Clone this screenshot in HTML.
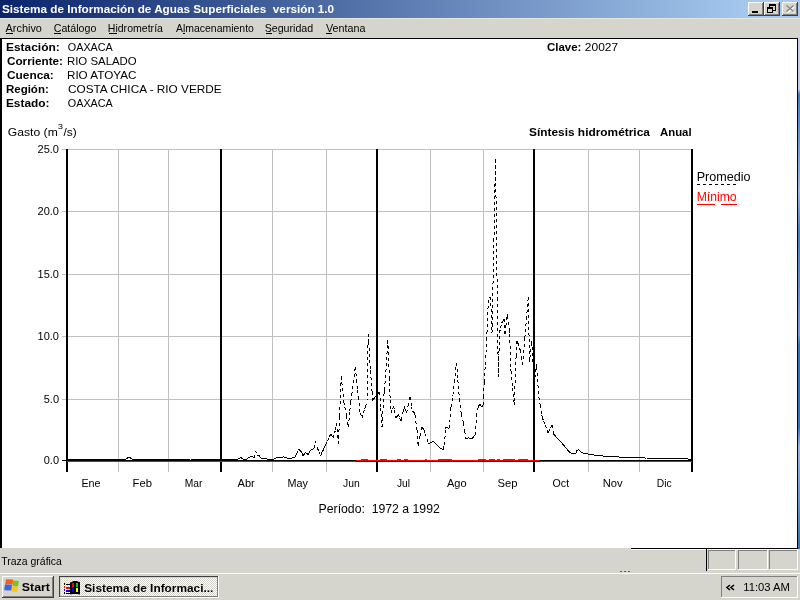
<!DOCTYPE html><html><head><meta charset="utf-8"><style>html,body{margin:0;padding:0;width:800px;height:600px;overflow:hidden;background:#D6D5CD}text{font-family:"Liberation Sans",sans-serif}</style></head><body><svg width="800" height="600" viewBox="0 0 800 600" style="display:block;will-change:transform" font-family="Liberation Sans, sans-serif"><defs><linearGradient id="tg" gradientUnits="userSpaceOnUse" x1="0" x2="760" y1="0" y2="0"><stop offset="0" stop-color="#0A246A"/><stop offset="1" stop-color="#A6CAF0"/></linearGradient><linearGradient id="rs" x1="0" x2="0" y1="0" y2="1"><stop offset="0" stop-color="#C8D0EC"/><stop offset="0.1" stop-color="#C0CCE8"/><stop offset="0.11" stop-color="#4A7CC0"/><stop offset="0.2" stop-color="#6A98D0"/><stop offset="0.3" stop-color="#9AB8E0"/><stop offset="0.38" stop-color="#4A7CC0"/><stop offset="0.58" stop-color="#7C9CD0"/><stop offset="0.6" stop-color="#3A70B8"/><stop offset="0.76" stop-color="#3A70B8"/><stop offset="0.8" stop-color="#9AB8E0"/><stop offset="0.9" stop-color="#6A98D0"/><stop offset="1" stop-color="#3A6EA5"/></linearGradient></defs><rect x="0" y="0" width="800" height="600" fill="#D6D5CD"/><rect x="0" y="0" width="800" height="18" fill="url(#tg)"/><text x="2.00" y="13" font-size="11" font-weight="bold" fill="#fff" textLength="332.15" lengthAdjust="spacingAndGlyphs">Sistema de Información de Aguas Superficiales&#160; versión 1.0</text><rect x="748" y="2" width="16" height="14" fill="#404040"/><rect x="748" y="2" width="15" height="13" fill="#fff"/><rect x="749" y="3" width="14" height="12" fill="#808080"/><rect x="749" y="3" width="13" height="11" fill="#D6D5CD"/><rect x="764" y="2" width="16" height="14" fill="#404040"/><rect x="764" y="2" width="15" height="13" fill="#fff"/><rect x="765" y="3" width="14" height="12" fill="#808080"/><rect x="765" y="3" width="13" height="11" fill="#D6D5CD"/><rect x="782" y="2" width="16" height="14" fill="#404040"/><rect x="782" y="2" width="15" height="13" fill="#fff"/><rect x="783" y="3" width="14" height="12" fill="#808080"/><rect x="783" y="3" width="13" height="11" fill="#D6D5CD"/><rect x="752" y="11" width="6" height="2" fill="#000"/><rect x="769" y="4" width="6" height="6" fill="none" stroke="#000" stroke-width="1" transform="translate(0.5,0.5)"/><rect x="769" y="4" width="7" height="2" fill="#000"/><rect x="767" y="7" width="6" height="6" fill="#D6D5CD"/><rect x="767.5" y="7.5" width="5" height="5" fill="none" stroke="#000" stroke-width="1"/><rect x="767" y="7" width="6" height="2" fill="#000"/><path d="M786.5 5.5 L793.5 11.5 M793.5 5.5 L786.5 11.5" stroke="#fff" stroke-width="1.3" transform="translate(1,1)"/><path d="M786.5 5.5 L793.5 11.5 M793.5 5.5 L786.5 11.5" stroke="#808080" stroke-width="1.3"/><rect x="0" y="18" width="800" height="1" fill="#E6E5DE"/><text x="5.60" y="32" font-size="11" fill="#000" textLength="36.33" lengthAdjust="spacingAndGlyphs">Archivo</text><text x="53.75" y="32" font-size="11" fill="#000" textLength="42.55" lengthAdjust="spacingAndGlyphs">Catálogo</text><text x="107.79" y="32" font-size="11" fill="#000" textLength="55.16" lengthAdjust="spacingAndGlyphs">Hidrometría</text><text x="176.00" y="32" font-size="11" fill="#000" textLength="77.89" lengthAdjust="spacingAndGlyphs">Almacenamiento</text><text x="264.63" y="32" font-size="11" fill="#000" textLength="48.52" lengthAdjust="spacingAndGlyphs">Seguridad</text><text x="326.00" y="32" font-size="11" fill="#000" textLength="39.37" lengthAdjust="spacingAndGlyphs">Ventana</text><rect x="6" y="33" width="7" height="1" fill="#000"/><rect x="54" y="33" width="7" height="1" fill="#000"/><rect x="109" y="33" width="8" height="1" fill="#000"/><rect x="183" y="33" width="2" height="1" fill="#000"/><rect x="266" y="33" width="6" height="1" fill="#000"/><rect x="326" y="33" width="6" height="1" fill="#000"/><rect x="0" y="38" width="798" height="510" fill="#000"/><rect x="2" y="39" width="795" height="509" fill="#fff"/><rect x="798" y="38" width="2" height="511" fill="url(#rs)"/><text x="5.91" y="51" font-size="11" font-weight="bold" fill="#000" textLength="53.84" lengthAdjust="spacingAndGlyphs">Estación:</text><text x="7.00" y="65" font-size="11" font-weight="bold" fill="#000" textLength="56.00" lengthAdjust="spacingAndGlyphs">Corriente:</text><text x="7.00" y="79" font-size="11" font-weight="bold" fill="#000" textLength="46.82" lengthAdjust="spacingAndGlyphs">Cuenca:</text><text x="5.95" y="93" font-size="11" font-weight="bold" fill="#000" textLength="42.84" lengthAdjust="spacingAndGlyphs">Región:</text><text x="5.92" y="107" font-size="11" font-weight="bold" fill="#000" textLength="43.63" lengthAdjust="spacingAndGlyphs">Estado:</text><text x="67.80" y="51" font-size="11" fill="#000" textLength="44.96" lengthAdjust="spacingAndGlyphs">OAXACA</text><text x="66.96" y="65" font-size="11" fill="#000" textLength="69.80" lengthAdjust="spacingAndGlyphs">RIO SALADO</text><text x="66.94" y="79" font-size="11" fill="#000" textLength="69.49" lengthAdjust="spacingAndGlyphs">RIO ATOYAC</text><text x="68.00" y="93" font-size="11" fill="#000" textLength="153.67" lengthAdjust="spacingAndGlyphs">COSTA CHICA - RIO VERDE</text><text x="67.80" y="107" font-size="11" fill="#000" textLength="44.96" lengthAdjust="spacingAndGlyphs">OAXACA</text><text x="547.00" y="51" font-size="11" font-weight="bold" fill="#000" textLength="34.37" lengthAdjust="spacingAndGlyphs">Clave:</text><text x="584.80" y="51" font-size="11" fill="#000" textLength="33.35" lengthAdjust="spacingAndGlyphs">20027</text><text x="7.80" y="136" font-size="11" fill="#000" textLength="49.96" lengthAdjust="spacingAndGlyphs">Gasto (m</text><text x="57.83" y="128.5" font-size="8" fill="#000" textLength="5.20" lengthAdjust="spacingAndGlyphs">3</text><text x="63.50" y="136" font-size="11" fill="#000" textLength="13.25" lengthAdjust="spacingAndGlyphs">/s)</text><text x="529.00" y="136" font-size="11" font-weight="bold" fill="#000" textLength="120.86" lengthAdjust="spacingAndGlyphs">Síntesis hidrométrica</text><text x="660.00" y="136" font-size="11" font-weight="bold" fill="#000" textLength="31.58" lengthAdjust="spacingAndGlyphs">Anual</text><rect x="62" y="149" width="631" height="1" fill="#C0C0C0"/><rect x="62" y="149" width="4" height="1" fill="#C0C0C0"/><rect x="62" y="211" width="631" height="1" fill="#C0C0C0"/><rect x="62" y="211" width="4" height="1" fill="#C0C0C0"/><rect x="62" y="274" width="631" height="1" fill="#C0C0C0"/><rect x="62" y="274" width="4" height="1" fill="#C0C0C0"/><rect x="62" y="336" width="631" height="1" fill="#C0C0C0"/><rect x="62" y="336" width="4" height="1" fill="#C0C0C0"/><rect x="62" y="399" width="631" height="1" fill="#C0C0C0"/><rect x="62" y="399" width="4" height="1" fill="#C0C0C0"/><rect x="118" y="149" width="1" height="323" fill="#C0C0C0"/><rect x="168" y="149" width="1" height="323" fill="#C0C0C0"/><rect x="272" y="149" width="1" height="323" fill="#C0C0C0"/><rect x="326" y="149" width="1" height="323" fill="#C0C0C0"/><rect x="430" y="149" width="1" height="323" fill="#C0C0C0"/><rect x="483" y="149" width="1" height="323" fill="#C0C0C0"/><rect x="588" y="149" width="1" height="323" fill="#C0C0C0"/><rect x="639" y="149" width="1" height="323" fill="#C0C0C0"/><rect x="66" y="149" width="2" height="323" fill="#000"/><rect x="220" y="149" width="2" height="323" fill="#000"/><rect x="376" y="149" width="2" height="323" fill="#000"/><rect x="533" y="149" width="2" height="323" fill="#000"/><rect x="691" y="149" width="2" height="323" fill="#000"/><rect x="62" y="460" width="631" height="1" fill="#000"/><text x="59" y="153" font-size="11" fill="#000" text-anchor="end">25.0</text><text x="59" y="215" font-size="11" fill="#000" text-anchor="end">20.0</text><text x="59" y="278" font-size="11" fill="#000" text-anchor="end">15.0</text><text x="59" y="340" font-size="11" fill="#000" text-anchor="end">10.0</text><text x="59" y="403" font-size="11" fill="#000" text-anchor="end">5.0</text><text x="59" y="464" font-size="11" fill="#000" text-anchor="end">0.0</text><text x="81.42" y="487" font-size="11" fill="#000" textLength="19.14" lengthAdjust="spacingAndGlyphs">Ene</text><text x="132.58" y="487" font-size="11" fill="#000" textLength="19.42" lengthAdjust="spacingAndGlyphs">Feb</text><text x="184.67" y="487" font-size="11" fill="#000" textLength="17.69" lengthAdjust="spacingAndGlyphs">Mar</text><text x="237.50" y="487" font-size="11" fill="#000" textLength="17.23" lengthAdjust="spacingAndGlyphs">Abr</text><text x="287.42" y="487" font-size="11" fill="#000" textLength="20.37" lengthAdjust="spacingAndGlyphs">May</text><text x="343.00" y="487" font-size="11" fill="#000" textLength="16.71" lengthAdjust="spacingAndGlyphs">Jun</text><text x="397.00" y="487" font-size="11" fill="#000" textLength="12.98" lengthAdjust="spacingAndGlyphs">Jul</text><text x="447.00" y="487" font-size="11" fill="#000" textLength="19.58" lengthAdjust="spacingAndGlyphs">Ago</text><text x="497.58" y="487" font-size="11" fill="#000" textLength="20.01" lengthAdjust="spacingAndGlyphs">Sep</text><text x="552.60" y="487" font-size="11" fill="#000" textLength="16.52" lengthAdjust="spacingAndGlyphs">Oct</text><text x="602.68" y="487" font-size="11" fill="#000" textLength="19.89" lengthAdjust="spacingAndGlyphs">Nov</text><text x="656.76" y="487" font-size="11" fill="#000" textLength="14.88" lengthAdjust="spacingAndGlyphs">Dic</text><text x="318.58" y="513" font-size="12" fill="#000" textLength="121.20" lengthAdjust="spacingAndGlyphs">Período:&#160; 1972 a 1992</text><text x="696.65" y="181" font-size="12" fill="#000" textLength="53.82" lengthAdjust="spacingAndGlyphs">Promedio</text><path d="M697 184.5 H736" stroke="#000" stroke-width="1" stroke-dasharray="3 3"/><text x="696.68" y="201" font-size="12" fill="#FF0000" textLength="39.96" lengthAdjust="spacingAndGlyphs">Mínimo</text><path d="M697 204.5 H737" stroke="#FF0000" stroke-width="1" stroke-dasharray="18 6"/><path d="M67.0 459.0L68.7 459.0M68.7 459.0L70.4 459.0M70.4 459.0L72.1 459.0M72.1 459.0L73.9 459.0M73.9 459.0L75.6 459.0M75.6 459.0L77.3 459.0M77.3 459.0L79.0 459.0M79.0 459.0L80.7 459.0M80.7 459.0L82.4 459.0M82.4 459.0L84.1 459.0M84.1 459.0L85.9 459.0M85.9 459.0L87.6 459.0M87.6 459.0L89.3 459.0M89.3 459.0L91.0 459.0M91.0 459.0L92.7 459.0M92.7 459.0L94.4 459.0M94.4 459.0L96.1 459.0M96.1 459.0L97.9 459.0M97.9 459.0L99.6 459.0M99.6 459.0L100.0 459.0M100.0 459.0L101.3 459.0M101.3 459.0L103.0 459.0M103.0 459.0L104.7 459.0M104.7 459.0L106.4 459.0M106.4 459.0L108.1 459.0M108.1 459.0L109.9 459.0M109.9 459.0L111.6 459.0M111.6 459.0L113.3 459.0M113.3 459.0L115.0 459.0M115.0 459.0L116.7 459.0M116.7 459.0L118.4 459.0M118.4 459.0L120.1 459.0M120.1 459.0L121.9 459.0M121.9 459.0L123.6 459.0M123.6 459.0L125.3 459.0M125.3 459.0L126.0 459.0M126.0 459.0L127.0 458.3M127.0 458.3L128.7 457.2M128.7 457.2L129.0 457.0M129.0 457.0L130.4 458.0M130.4 458.0L132.0 459.0M132.0 459.0L132.1 459.0M132.1 459.0L133.9 459.0M133.9 459.0L135.6 459.0M135.6 459.0L137.3 459.0M137.3 459.0L139.0 459.0M139.0 459.0L140.7 459.0M140.7 459.0L142.4 459.0M142.4 459.0L144.1 459.0M144.1 459.0L145.9 459.0M145.9 459.0L147.6 459.0M147.6 459.0L149.3 459.0M149.3 459.0L151.0 459.0M151.0 459.0L152.7 459.0M152.7 459.0L154.4 459.0M154.4 459.0L156.1 459.0M156.1 459.0L157.9 459.0M157.9 459.0L159.6 459.0M159.6 459.0L160.0 459.0M160.0 459.0L161.3 459.0M161.3 459.0L163.0 459.0M163.0 459.0L164.7 459.0M164.7 459.0L166.4 459.0M166.4 459.0L168.1 459.0M168.1 459.0L169.9 459.0M169.9 459.0L171.6 459.0M171.6 459.0L173.3 459.0M173.3 459.0L175.0 459.0M175.0 459.0L176.7 459.0M176.7 459.0L178.4 459.0M178.4 459.0L180.1 459.0M180.1 459.0L181.9 459.0M181.9 459.0L183.6 459.0M183.6 459.0L185.3 459.0M185.3 459.0L187.0 459.0M187.0 459.0L188.7 459.0M188.7 459.0L190.0 459.0M190.0 459.0L190.4 459.0M190.4 459.0L192.1 459.1M192.1 459.1L193.9 459.1M193.9 459.1L195.6 459.2M195.6 459.2L197.3 459.2M197.3 459.2L199.0 459.3M199.0 459.3L200.7 459.4M200.7 459.4L202.4 459.4M202.4 459.4L204.1 459.5M204.1 459.5L205.9 459.5M205.9 459.5L207.6 459.6M207.6 459.6L209.3 459.6M209.3 459.6L211.0 459.7M211.0 459.7L212.7 459.8M212.7 459.8L214.4 459.8M214.4 459.8L216.1 459.9M216.1 459.9L217.9 459.9M217.9 459.9L219.6 460.0M219.6 460.0L220.0 460.0M220.0 460.0L221.3 459.9M221.3 459.9L223.0 459.8M223.0 459.8L224.7 459.6M224.7 459.6L226.4 459.5M226.4 459.5L227.5 459.4M227.5 459.4L228.1 459.4M228.1 459.4L229.9 459.6M229.9 459.6L231.6 459.7M231.6 459.7L232.5 459.8M232.5 459.8L233.3 459.6M233.3 459.6L235.0 459.4M235.0 459.4L236.7 459.2M236.7 459.2L238.0 459.0M238.0 459.0L238.4 458.8M238.4 458.8L240.1 457.8M240.1 457.8L240.6 457.5M240.6 457.5L241.9 458.3M241.9 458.3L243.0 459.0M243.0 459.0L243.6 459.1M243.6 459.1L245.3 459.3M245.3 459.3L246.0 459.4M246.0 459.4L247.0 458.8M247.0 458.8L248.7 457.8M248.7 457.8L250.0 457.0M250.0 457.0L250.4 456.8M250.4 456.8L251.9 456.2M251.9 456.2L252.1 456.4M252.1 456.4L253.9 457.6M253.9 457.6L254.4 458.0M254.4 458.0L255.6 450.8M255.6 450.8L255.6 450.6M255.6 450.6L256.9 455.6M256.9 455.6L257.3 455.5M257.3 455.5L258.8 455.0M258.8 455.0L259.0 455.4M259.0 455.4L260.6 458.0M260.6 458.0L260.7 458.0M260.7 458.0L262.4 458.3M262.4 458.3L264.1 458.5M264.1 458.5L265.9 458.7M265.9 458.7L266.0 458.8M266.0 458.8L267.6 459.1M267.6 459.1L269.3 459.4M269.3 459.4L271.0 459.7M271.0 459.7L272.5 460.0M272.5 460.0L272.7 459.9M272.7 459.9L274.4 458.8M274.4 458.8L276.1 457.8M276.1 457.8L276.2 457.8M276.2 457.8L277.9 457.6M277.9 457.6L279.6 457.4M279.6 457.4L281.3 457.2M281.3 457.2L283.0 457.0M283.0 457.0L283.8 456.9M283.8 456.9L284.7 457.3M284.7 457.3L286.4 457.9M286.4 457.9L288.1 458.5M288.1 458.5L288.8 458.8M288.8 458.8L289.9 458.5M289.9 458.5L291.6 458.1M291.6 458.1L293.3 457.7M293.3 457.7L294.4 457.5M294.4 457.5L295.0 456.7M295.0 456.7L296.2 455.0M296.2 455.0L296.7 453.8M296.7 453.8L298.4 449.6M298.4 449.6L298.8 448.8M298.8 448.8L300.1 450.5M300.1 450.5L301.2 451.9M301.2 451.9L301.9 453.1M301.9 453.1L303.1 455.6M303.1 455.6L303.6 455.0M303.6 455.0L305.3 452.9M305.3 452.9L305.6 452.5M305.6 452.5L307.0 453.6M307.0 453.6L308.1 454.4M308.1 454.4L308.7 453.4M308.7 453.4L310.4 450.7M310.4 450.7L311.2 449.4M311.2 449.4L312.1 449.2M312.1 449.2L313.8 448.8M313.8 448.8L313.9 448.3M313.9 448.3L315.6 440.7M315.6 440.7L315.6 440.6M315.6 440.6L316.9 446.9M316.9 446.9L317.3 447.8M317.3 447.8L319.0 451.8M319.0 451.8L320.6 455.6M320.6 455.6L320.7 455.4M320.7 455.4L322.4 451.6M322.4 451.6L323.8 448.8M323.8 448.8L324.1 447.9M324.1 447.9L325.0 446.0M325.0 446.0L325.9 444.1M325.9 444.1L327.3 441.0M327.3 441.0L327.6 440.5M327.6 440.5L329.3 437.0M329.3 437.0L330.8 434.0M330.8 434.0L331.0 434.4M331.0 434.4L332.7 437.5M332.7 437.5L333.0 438.0M333.0 438.0L334.4 433.4M334.4 433.4L335.5 430.0M335.5 430.0L336.1 426.2M336.1 426.2L336.7 423.0M336.7 423.0L337.9 436.3M337.9 436.3L338.5 443.7M338.5 443.7L339.5 418.0M339.5 418.0L339.6 416.3M339.6 416.3L341.3 376.3M341.3 376.3L341.3 376.0M341.3 376.0L343.0 394.2M343.0 394.2L343.7 401.7M343.7 401.7L344.7 406.7M344.7 406.7L346.0 413.0M346.0 413.0L346.4 415.7M346.4 415.7L348.1 426.3M348.1 426.3L348.3 427.3M348.3 427.3L349.9 410.7M349.9 410.7L350.7 401.7M350.7 401.7L351.6 396.2M351.6 396.2L351.8 394.7M351.8 394.7L353.3 382.8M353.3 382.8L355.0 369.1M355.0 369.1L355.3 366.7M355.3 366.7L356.7 380.4M356.7 380.4L357.7 390.0M357.7 390.0L358.4 397.3M358.4 397.3L360.0 413.0M360.0 413.0L360.1 413.3M360.1 413.3L361.9 417.0M361.9 417.0L362.3 418.0M362.3 418.0L363.6 413.1M363.6 413.1L364.7 408.7M364.7 408.7L365.3 406.9M365.3 406.9L367.0 401.7M367.0 401.7L368.2 334.0M368.2 334.0L368.7 342.3M368.7 342.3L370.4 370.1M370.4 370.1L370.5 371.3M370.5 371.3L372.1 392.2M372.1 392.2L372.8 400.5M372.8 400.5L373.9 398.8M373.9 398.8L375.0 397.0M375.0 397.0L375.6 396.4M375.6 396.4L377.3 394.6M377.3 394.6L379.0 392.7M379.0 392.7L379.7 392.0M379.7 392.0L380.7 407.6M380.7 407.6L382.0 427.3M382.0 427.3L382.4 420.3M382.4 420.3L384.1 392.5M384.1 392.5L384.3 390.0M384.3 390.0L385.5 378.0M385.5 378.0L385.9 372.1M385.9 372.1L387.6 343.6M387.6 343.6L387.8 339.8M387.8 339.8L389.3 377.6M389.3 377.6L389.5 383.0M389.5 383.0L390.2 400.5M390.2 400.5L391.0 409.8M391.0 409.8L391.3 413.3M391.3 413.3L392.7 409.2M392.7 409.2L393.7 406.3M393.7 406.3L394.4 410.0M394.4 410.0L396.0 418.0M396.0 418.0L396.1 417.8M396.1 417.8L397.9 415.2M397.9 415.2L398.3 414.5M398.3 414.5L399.6 417.8M399.6 417.8L401.0 421.5M401.0 421.5L401.3 420.1M401.3 420.1L403.0 412.0M403.0 412.0L404.2 406.3M404.2 406.3L404.7 407.9M404.7 407.9L406.4 413.1M406.4 413.1L406.5 413.3M406.5 413.3L408.1 405.6M408.1 405.6L409.9 397.7M409.9 397.7L410.0 397.0M410.0 397.0L411.6 406.6M411.6 406.6L412.3 411.0M412.3 411.0L413.3 411.9M413.3 411.9L414.7 413.3M414.7 413.3L415.0 415.4M415.0 415.4L416.7 427.7M416.7 427.7L417.0 429.7M417.0 429.7L418.2 446.0M418.2 446.0L418.4 444.8M418.4 444.8L420.1 435.6M420.1 435.6L421.7 427.3M421.7 427.3L421.9 427.5M421.9 427.5L423.6 429.3M423.6 429.3L424.0 429.7M424.0 429.7L425.3 433.7M425.3 433.7L427.0 439.0M427.0 439.0L428.5 443.7M428.5 443.7L428.7 443.6M428.7 443.6L430.4 442.7M430.4 442.7L432.1 441.8M432.1 441.8L433.2 441.3M433.2 441.3L433.9 442.0M433.9 442.0L435.6 443.7M435.6 443.7L436.7 444.8M436.7 444.8L437.3 445.4M437.3 445.4L439.0 447.1M439.0 447.1L440.2 448.3M440.2 448.3L440.7 448.5M440.7 448.5L442.4 449.1M442.4 449.1L443.7 449.5M443.7 449.5L444.1 445.2M444.1 445.2L445.9 428.7M445.9 428.7L446.0 427.3M446.0 427.3L447.6 427.8M447.6 427.8L449.3 428.4M449.3 428.4L449.5 428.5M449.5 428.5L450.7 408.7M450.7 408.7L451.0 406.9M451.0 406.9L452.7 396.4M452.7 396.4L453.0 394.7M453.0 394.7L454.4 381.8M454.4 381.8L456.1 366.4M456.1 366.4L456.5 363.2M456.5 363.2L457.9 380.4M457.9 380.4L458.8 392.3M458.8 392.3L459.6 399.0M459.6 399.0L461.2 413.3M461.2 413.3L461.3 413.7M461.3 413.7L463.0 420.7M463.0 420.7L463.5 422.7M463.5 422.7L464.7 431.3M464.7 431.3L465.8 439.0M465.8 439.0L466.4 438.7M466.4 438.7L468.1 437.8M468.1 437.8L468.2 437.8M468.2 437.8L469.9 438.4M469.9 438.4L471.6 439.0M471.6 439.0L471.7 439.0M471.7 439.0L473.3 437.1M473.3 437.1L475.0 435.0M475.0 435.0L476.7 416.1M476.7 416.1L477.3 409.7M477.3 409.7L478.4 406.9M478.4 406.9L479.7 403.8M479.7 403.8L480.1 404.5M480.1 404.5L481.9 407.1M481.9 407.1L482.0 407.3M482.0 407.3L483.2 405.0M483.2 405.0L483.6 397.1M483.6 397.1L484.3 381.7M484.3 381.7L485.3 364.5M485.3 364.5L486.7 339.7M486.7 339.7L487.0 332.6M487.0 332.6L488.5 297.0M488.5 297.0L488.7 297.0M488.7 297.0L490.4 297.0M490.4 297.0L490.5 297.0M490.5 297.0L492.0 333.0M492.0 333.0L492.1 325.9M492.1 325.9L493.9 240.7M493.9 240.7L495.5 159.0M495.5 159.0L495.6 164.6M495.6 164.6L497.3 298.0M497.3 298.0L498.3 377.0M498.3 377.0L499.0 351.2M499.0 351.2L499.5 332.7M499.5 332.7L500.7 327.6M500.7 327.6L501.8 323.0M501.8 323.0L502.4 321.9M502.4 321.9L504.1 318.8M504.1 318.8L504.2 318.7M504.2 318.7L505.0 333.7M505.0 333.7L505.9 326.3M505.9 326.3L507.3 313.8M507.3 313.8L507.6 316.1M507.6 316.1L509.3 330.3M509.3 330.3L509.7 333.7M509.7 333.7L510.8 368.7M510.8 368.7L511.0 370.8M511.0 370.8L512.7 388.4M512.7 388.4L514.3 404.8M514.3 404.8L514.4 401.4M514.4 401.4L516.1 355.6M516.1 355.6L516.7 340.7M516.7 340.7L517.8 343.0M517.8 343.0L517.9 343.2M517.9 343.2L519.6 348.2M519.6 348.2L520.2 350.0M520.2 350.0L521.3 357.2M521.3 357.2L522.5 365.2M522.5 365.2L523.0 359.4M523.0 359.4L524.7 339.3M524.7 339.3L524.8 338.3M524.8 338.3L526.4 319.3M526.4 319.3L528.1 299.3M528.1 299.3L528.3 297.5M528.3 297.5L529.5 361.7M529.5 361.7L529.9 358.4M529.9 358.4L531.6 342.8M531.6 342.8L531.8 340.7M531.8 340.7L533.3 368.1M533.3 368.1L534.2 385.0M534.2 385.0L535.0 377.7M535.0 377.7L536.5 364.0M536.5 364.0L536.7 367.0M536.7 367.0L538.4 391.4M538.4 391.4L538.8 396.7M538.8 396.7L540.1 404.8M540.1 404.8L541.9 415.0M541.9 415.0L542.3 417.7M542.3 417.7L543.6 421.0M543.6 421.0L545.3 425.5M545.3 425.5L547.0 430.0M547.0 430.0L548.0 432.6M548.0 432.6L548.7 431.3M548.7 431.3L550.4 428.3M550.4 428.3L552.1 425.3M552.1 425.3L552.3 425.0M552.3 425.0L553.4 433.7M553.4 433.7L553.9 434.2M553.9 434.2L555.6 436.3M555.6 436.3L557.3 438.3M557.3 438.3L558.7 440.0M558.7 440.0L559.0 440.3M559.0 440.3L560.7 441.9M560.7 441.9L561.8 443.0M561.8 443.0L562.4 443.8M562.4 443.8L564.1 445.8M564.1 445.8L565.9 447.8M565.9 447.8L567.6 449.9M567.6 449.9L569.3 451.9M569.3 451.9L570.0 452.8M570.0 452.8L571.0 453.0M571.0 453.0L572.7 453.3M572.7 453.3L574.4 453.7M574.4 453.7L575.6 453.9M575.6 453.9L576.1 452.6M576.1 452.6L577.8 448.6M577.8 448.6L577.9 448.7M577.9 448.7L579.6 450.4M579.6 450.4L581.3 452.1M581.3 452.1L582.0 452.8M582.0 452.8L583.0 453.0M583.0 453.0L584.7 453.4M584.7 453.4L586.4 453.7M586.4 453.7L587.3 453.9M587.3 453.9L588.1 454.0M588.1 454.0L589.9 454.3M589.9 454.3L591.6 454.6M591.6 454.6L593.3 454.9M593.3 454.9L593.7 455.0M593.7 455.0L595.0 455.1M595.0 455.1L596.7 455.3M596.7 455.3L598.4 455.5M598.4 455.5L600.1 455.7M600.1 455.7L601.9 455.9M601.9 455.9L603.6 456.1M603.6 456.1L605.3 456.2M605.3 456.2L607.0 456.4M607.0 456.4L608.6 456.6M608.6 456.6L608.7 456.6M608.7 456.6L610.4 456.7M610.4 456.7L612.1 456.7M612.1 456.7L613.9 456.8M613.9 456.8L615.6 456.9M615.6 456.9L617.3 456.9M617.3 456.9L619.0 457.0M619.0 457.0L620.7 457.1M620.7 457.1L622.4 457.2M622.4 457.2L624.1 457.2M624.1 457.2L625.9 457.3M625.9 457.3L627.6 457.4M627.6 457.4L629.3 457.4M629.3 457.4L631.0 457.5M631.0 457.5L632.7 457.6M632.7 457.6L634.4 457.6M634.4 457.6L636.0 457.7M636.0 457.7L636.1 457.7M636.1 457.7L637.9 457.8M637.9 457.8L639.6 457.8M639.6 457.8L641.3 457.9M641.3 457.9L643.0 457.9M643.0 457.9L644.7 458.0M644.7 458.0L646.4 458.0M646.4 458.0L648.1 458.1M648.1 458.1L649.9 458.1M649.9 458.1L651.6 458.2M651.6 458.2L653.3 458.2M653.3 458.2L655.0 458.3M655.0 458.3L656.7 458.3M656.7 458.3L658.4 458.4M658.4 458.4L660.1 458.5M660.1 458.5L661.9 458.5M661.9 458.5L663.6 458.6M663.6 458.6L665.3 458.6M665.3 458.6L667.0 458.7M667.0 458.7L668.0 458.7M668.0 458.7L668.7 458.7M668.7 458.7L670.4 458.7M670.4 458.7L672.1 458.8M672.1 458.8L673.9 458.8M673.9 458.8L675.6 458.8M675.6 458.8L677.3 458.8M677.3 458.8L679.0 458.8M679.0 458.8L680.7 458.9M680.7 458.9L682.4 458.9M682.4 458.9L684.1 458.9M684.1 458.9L685.9 458.9M685.9 458.9L687.6 459.0M687.6 459.0L689.3 459.0M689.3 459.0L691.0 459.0" fill="none" stroke="#000" stroke-width="1" stroke-dasharray="3 3" shape-rendering="crispEdges"/><rect x="67" y="461" width="625" height="1" fill="#FF0000"/><rect x="356" y="461" width="184" height="1" fill="#000"/><rect x="356" y="460" width="184" height="1" fill="#FF0000"/><rect x="361" y="459" width="7" height="1" fill="#FF0000"/><rect x="380" y="459" width="7" height="1" fill="#FF0000"/><rect x="397" y="459" width="4" height="1" fill="#FF0000"/><rect x="404" y="459" width="4" height="1" fill="#FF0000"/><rect x="425" y="459" width="2" height="1" fill="#FF0000"/><rect x="438" y="459" width="14" height="1" fill="#FF0000"/><rect x="478" y="459" width="8" height="1" fill="#FF0000"/><rect x="489" y="459" width="6" height="1" fill="#FF0000"/><rect x="497" y="459" width="3" height="1" fill="#FF0000"/><rect x="503" y="459" width="12" height="1" fill="#FF0000"/><rect x="518" y="459" width="10" height="1" fill="#FF0000"/><text x="1.30" y="564.5" font-size="11" fill="#000" textLength="60.61" lengthAdjust="spacingAndGlyphs">Traza gráfica</text><rect x="631" y="548" width="167" height="1" fill="#000"/><rect x="631" y="549" width="167" height="1" fill="#fff"/><rect x="706" y="548" width="1" height="23" fill="#000"/><rect x="708" y="550" width="28" height="20" fill="#fff"/><rect x="708" y="550" width="27" height="19" fill="#808080"/><rect x="709" y="551" width="26" height="18" fill="#D6D5CD"/><rect x="738" y="550" width="30" height="20" fill="#fff"/><rect x="738" y="550" width="29" height="19" fill="#808080"/><rect x="739" y="551" width="28" height="18" fill="#D6D5CD"/><rect x="769" y="550" width="29" height="20" fill="#fff"/><rect x="769" y="550" width="28" height="19" fill="#808080"/><rect x="770" y="551" width="27" height="18" fill="#D6D5CD"/><rect x="0" y="572" width="800" height="1" fill="#D6D5CD"/><rect x="0" y="573" width="800" height="1" fill="#fff"/><rect x="620" y="571" width="2" height="1" fill="#606060"/><rect x="624" y="571" width="2" height="1" fill="#606060"/><rect x="628" y="571" width="2" height="1" fill="#606060"/><rect x="2" y="576" width="52" height="22" fill="#404040"/><rect x="2" y="576" width="51" height="21" fill="#fff"/><rect x="3" y="577" width="50" height="20" fill="#808080"/><rect x="3" y="577" width="49" height="19" fill="#D6D5CD"/><path d="M6 579.2 L13.2 579.6 L12.6 584.4 L5.2 584.2Z" fill="#F0601E"/><path d="M13.2 580.6 L18.8 581 L18.2 586.6 L12.6 586.2Z" fill="#7CC41A"/><path d="M5 584.6 L12 584.8 L11.4 590.6 L4.2 590.2Z" fill="#3E62E8"/><path d="M12.2 586.4 L17.8 586.8 L17.2 592 L11.4 591.6Z" fill="#F8C812"/><text x="21.75" y="590.5" font-size="11" font-weight="bold" fill="#000" textLength="28.22" lengthAdjust="spacingAndGlyphs">Start</text><defs><pattern id="dith" width="2" height="2" patternUnits="userSpaceOnUse"><rect width="2" height="2" fill="#fff"/><rect width="1" height="1" fill="#D6D5CD"/><rect x="1" y="1" width="1" height="1" fill="#D6D5CD"/></pattern></defs><rect x="59" y="576" width="160" height="22" fill="#fff"/><rect x="59" y="576" width="159" height="21" fill="#404040"/><rect x="60" y="577" width="158" height="20" fill="#808080"/><rect x="60" y="577" width="157" height="19" fill="#D6D5CD"/><rect x="61" y="578" width="156" height="18" fill="url(#dith)"/><rect x="64" y="583" width="1" height="2" fill="#000"/><rect x="64" y="586" width="1" height="2" fill="#f00"/><rect x="64" y="589" width="1" height="2" fill="#00f"/><rect x="64" y="592" width="1" height="2" fill="#000"/><rect x="66" y="584" width="4" height="1" fill="#000"/><rect x="66" y="587" width="4" height="2" fill="#f00"/><rect x="66" y="590" width="4" height="2" fill="#00f"/><rect x="66" y="593" width="4" height="1" fill="#000"/><path d="M70 582.5 L72 582 L73 581 L77 581 L79 582 L80 582 L80 594.6 L77 594 L73 594 L70 594.6Z" fill="#000"/><rect x="72" y="583" width="2" height="4" fill="#f00"/><rect x="76" y="583" width="2" height="4" fill="#0c0"/><rect x="72" y="588" width="2" height="4" fill="#00f"/><rect x="76" y="588" width="2" height="4" fill="#ff0"/><text x="84.20" y="592" font-size="11" font-weight="bold" fill="#000" textLength="129.19" lengthAdjust="spacingAndGlyphs">Sistema de Informaci...</text><rect x="721" y="576" width="77" height="22" fill="#fff"/><rect x="721" y="576" width="76" height="21" fill="#808080"/><rect x="722" y="577" width="75" height="20" fill="#D6D5CD"/><path d="M730 585 L727 587.5 L730 590 M734 585 L731 587.5 L734 590" fill="none" stroke="#000" stroke-width="1.6"/><text x="743.28" y="591" font-size="11" fill="#000" textLength="46.71" lengthAdjust="spacingAndGlyphs">11:03 AM</text></svg></body></html>
